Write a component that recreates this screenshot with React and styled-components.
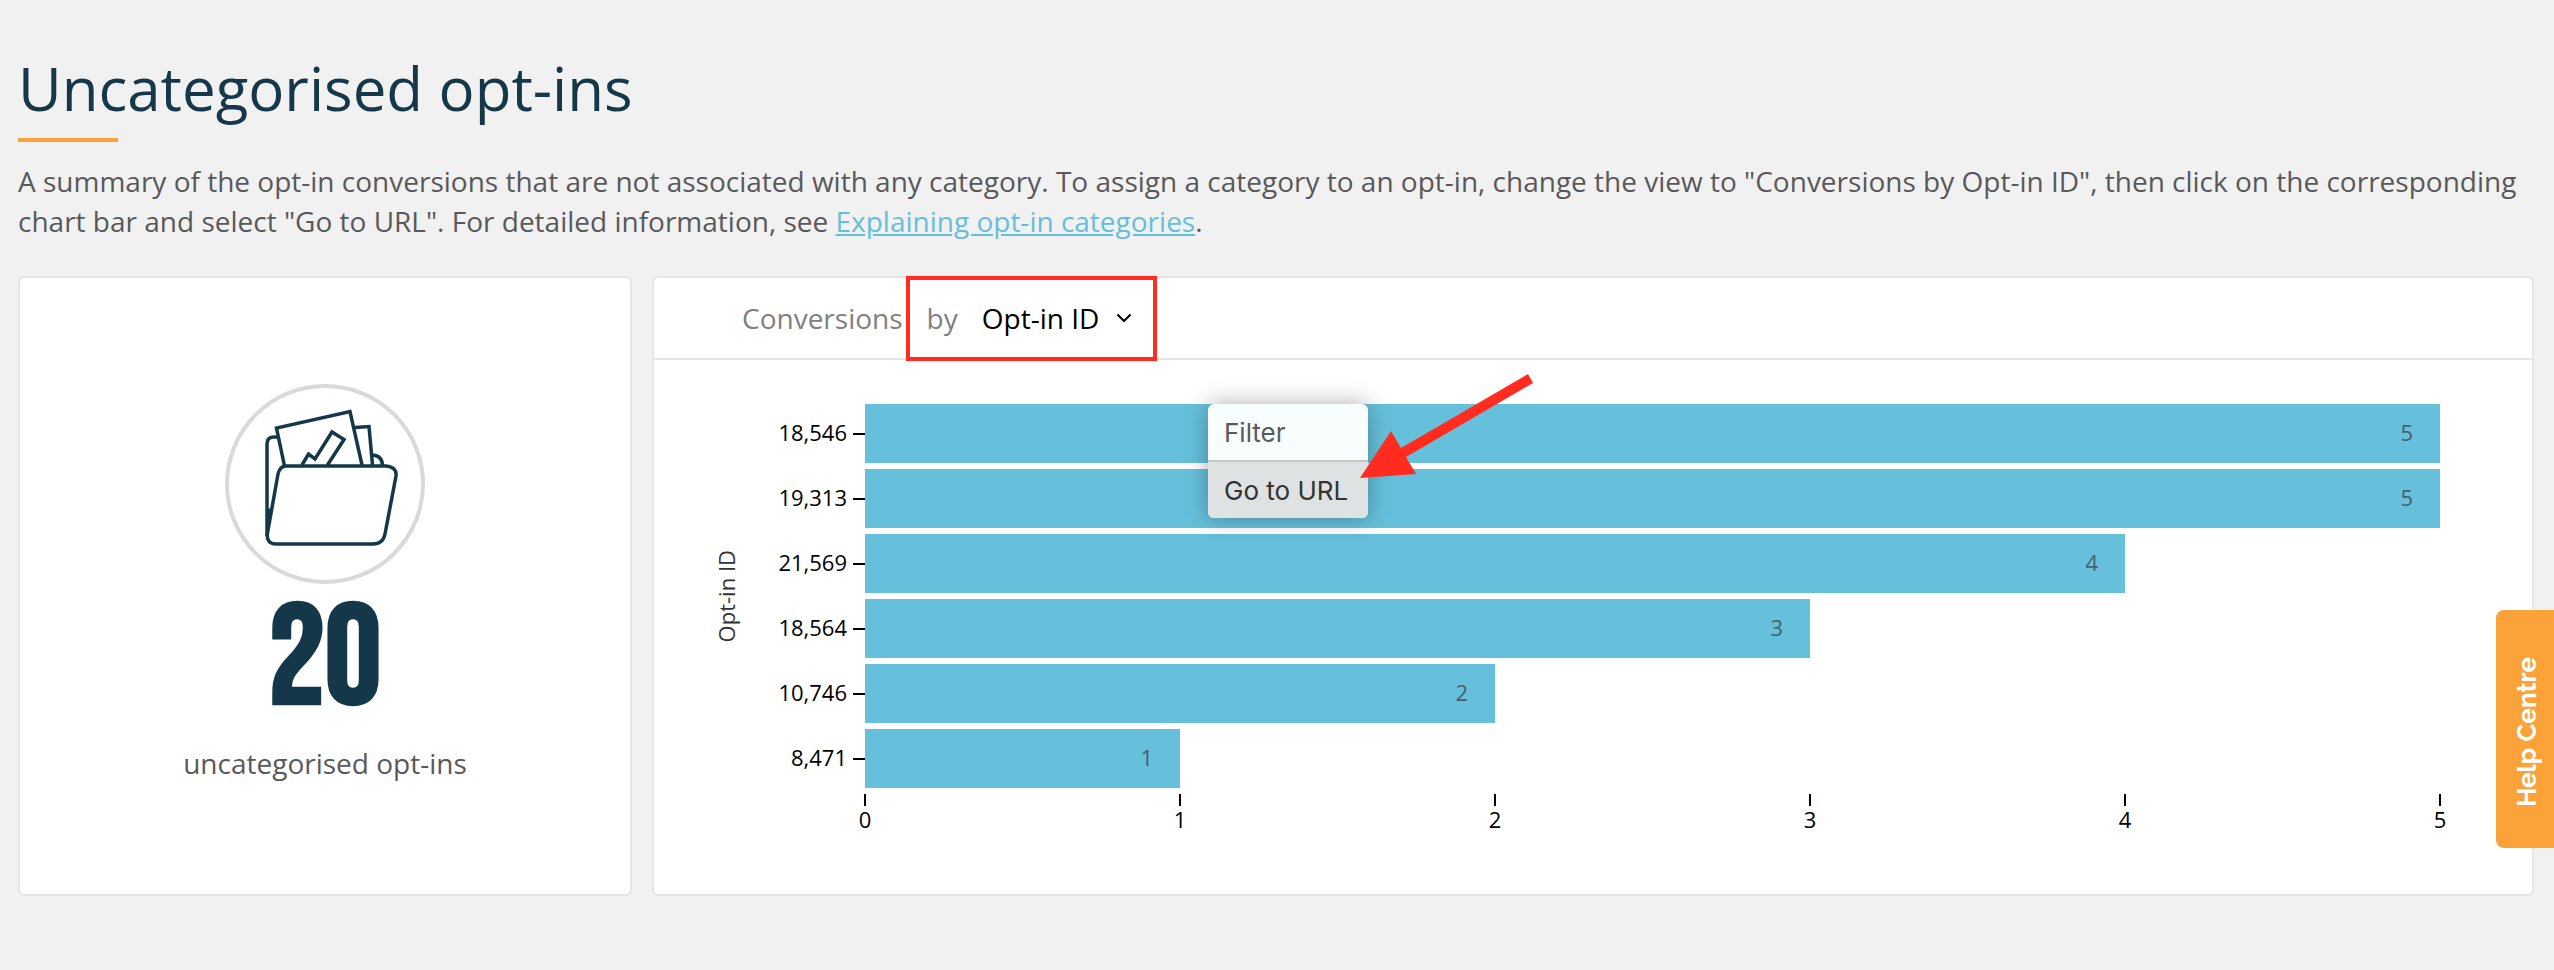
import React from "react";
import styled, { createGlobalStyle } from "styled-components";

const GlobalStyle = createGlobalStyle`
  *, *::before, *::after { box-sizing: border-box; }
  body {
    margin: 0;
    background: #f1f1f1;
    color: #595959;
    font-family: "Open Sans", "Noto Sans", sans-serif;
    font-size: 28px;
    line-height: 40px;
  }
`;

const Page = styled.main`
  min-height: 100vh;
  padding: 48px 20px 72px 18px;
`;

const Title = styled.h1`
  margin: 0;
  color: #15374a;
  font-size: 60px;
  font-weight: 400;
  line-height: 80px;

  &::after {
    content: "";
    display: block;
    width: 100px;
    height: 4px;
    margin-top: 10px;
    background: #fba238;
  }
`;

const Summary = styled.p`
  margin: 19px 0 35px;
`;

const Term = styled.strong`
  font-weight: 500;
`;

const DocLink = styled.a`
  color: #65bfda;
  text-decoration: underline;
`;

const Panels = styled.div`
  display: grid;
  grid-template-columns: minmax(0, 307fr) minmax(0, 941fr);
  gap: 20px;
`;

const Card = styled.section`
  background: #fff;
  border: 2px solid #e5e5e5;
  border-radius: 6px;
`;

const StatCard = styled(Card)`
  display: flex;
  flex-direction: column;
  align-items: center;
  padding: 106px 16px 0;
`;

const StatIcon = styled.svg`
  width: 200px;
  height: 200px;
`;

const StatNumber = styled.div`
  margin-top: 27px;
  color: #15374a;
  font-family: "Bebas Neue", "Anton", "Liberation Sans Narrow", "Liberation Sans", sans-serif;
  font-size: 140px;
  font-weight: 700;
  line-height: 100px;
`;

const StatLabel = styled.div`
  margin-top: 32px;
`;

const ChartHeader = styled.header`
  display: flex;
  height: 80px;
  padding-left: 88px;
  border-bottom: 2px solid #e5e5e5;
  color: #808080;
  box-sizing: content-box;
`;

const HeaderText = styled.span`
  align-self: center;
`;

const GroupBy = styled.label`
  position: relative;
  display: flex;
  align-items: center;
  gap: 24px;
  margin-left: 3px;
  padding: 0 25px 0 21px;

  &::after {
    content: "";
    position: absolute;
    inset: -2px 0 -3px;
    border: 4px solid #ff2c1f;
    pointer-events: none;
  }
`;

const SelectWrap = styled.span`
  display: flex;
  align-items: center;
`;

const GroupSelect = styled.select`
  appearance: none;
  margin: 0 -16px 0 0;
  padding: 0 32px 0 0;
  border: 0;
  background: transparent;
  color: #000;
  font: inherit;
`;

const Chevron = styled.svg`
  width: 16px;
  height: 10px;
  pointer-events: none;
`;

const Chart = styled.div`
  display: grid;
  grid-template-columns: 28px 125px minmax(0, 1fr);
  row-gap: 6px;
  padding: 44px 92px 62px 58px;
  color: #000;
  font-size: 22px;
  line-height: 30px;
`;

const AxisTitle = styled.div`
  justify-self: center;
  align-self: center;
  writing-mode: vertical-rl;
  transform: rotate(180deg);
  color: #333;
`;

const Rows = styled.div`
  display: flex;
  flex-direction: column;
  gap: 6px;
`;

const RowLabel = styled.div`
  display: flex;
  justify-content: flex-end;
  gap: 6px;
  height: 59px;
  line-height: 56px;

  &::after {
    content: "";
    width: 12px;
    height: 2px;
    margin-top: 29px;
    background: #000;
  }
`;

const Plot = styled(Rows)`
  position: relative;
`;

const Bar = styled.div`
  height: 59px;
  padding-right: 27px;
  background: #66c0db;
  color: #44626d;
  line-height: 56px;
  text-align: right;
`;

const ValueAxis = styled.div`
  grid-column: 3;
  display: flex;
  justify-content: space-between;
  line-height: 26px;
`;

const ValueTick = styled.div`
  display: flex;
  flex-direction: column;
  align-items: center;
  width: 0;

  &::before {
    content: "";
    flex: none;
    width: 2px;
    height: 12px;
    background: #000;
  }
`;

const BarMenu = styled.div`
  position: absolute;
  top: 0;
  left: 343px;
  width: 160px;
  border-radius: 6px;
  background: #f8fdfe;
  box-shadow: 0 0 24px rgba(0, 0, 0, 0.32);
  overflow: hidden;
`;

const MenuItem = styled.button`
  display: block;
  width: 100%;
  height: ${(p) => (p.$active ? 58 : 56)}px;
  padding: 2px 16px 0;
  border: 0;
  border-top: ${(p) => (p.$active ? "2px solid #c3c7c8" : "0")};
  background: ${(p) => (p.$active ? "#dfe2e3" : "transparent")};
  color: ${(p) => (p.$active ? "#333" : "#595959")};
  font-family: Inter, "Liberation Sans", sans-serif;
  font-size: 26px;
  line-height: 40px;
  text-align: left;
  white-space: nowrap;
`;

const Arrow = styled.svg`
  position: absolute;
  top: -30px;
  left: 495px;
  width: 174px;
  height: 106px;
  pointer-events: none;
`;

const HelpTab = styled.button`
  position: fixed;
  top: 610px;
  right: 0;
  display: flex;
  align-items: center;
  justify-content: center;
  width: 58px;
  height: 238px;
  padding: 6px 0 0 4px;
  border: 0;
  border-radius: 8px 0 0 8px;
  background: #fba238;
  color: #fff;
  font-family: Raleway, Lato, sans-serif;
  font-size: 26px;
  font-weight: 700;
  line-height: 36px;
`;

const HelpText = styled.span`
  writing-mode: vertical-rl;
  transform: rotate(180deg);
`;

const DATA = [
  { id: "18,546", value: 5 },
  { id: "19,313", value: 5 },
  { id: "21,569", value: 4 },
  { id: "18,564", value: 3 },
  { id: "10,746", value: 2 },
  { id: "8,471", value: 1 },
];
const MAX = 5;

function FolderIcon() {
  return (
    <StatIcon viewBox="0 0 200 200" fill="none" aria-hidden="true">
      <circle cx="100" cy="100" r="98" stroke="#d9d9d9" strokeWidth="4" />
      <g stroke="#15374a" strokeWidth="3.500">
        <path d="M52 53 H49 Q42 53 42 60 V152" />
        <path d="M59.500 82 L51.500 44 L125 27.500 L137 81" />
        <path d="M130 43.500 L144 42.500 L147.500 81" />
        <path d="M148 71 Q157.500 72 157.500 82" />
        <path d="M77 81 L83.500 70 L90 75 L107 48 L119 55.500 L102.500 81" />
        <path d="M61 82 H161 Q172 83 171 92 L160 150 Q158 160 148 160 H51 Q41 160 42.500 149 L53 90 Q55 82 61 82 Z" />
        <path d="M43 125 V146 L46 125 Z" fill="#15374a" strokeWidth="1" />
      </g>
    </StatIcon>
  );
}

export default function App() {
  return (
    <>
      <GlobalStyle />
      <Page>
        <Title>Uncategorised opt-ins</Title>
        <Summary>
          A summary of the opt-in conversions that are not associated with any category. To assign a
          category to an opt-in, change the view to "<Term>Conversions by Opt-in ID</Term>", then click
          on the corresponding chart bar and select "<Term>Go to URL</Term>". For detailed information,
          see <DocLink href="#opt-in-categories">Explaining opt-in categories</DocLink>.
        </Summary>
        <Panels>
          <StatCard>
            <FolderIcon />
            <StatNumber>20</StatNumber>
            <StatLabel>uncategorised opt-ins</StatLabel>
          </StatCard>
          <Card>
            <ChartHeader>
              <HeaderText>Conversions</HeaderText>
              <GroupBy>
                by
                <SelectWrap>
                  <GroupSelect defaultValue="id">
                    <option value="id">Opt-in ID</option>
                  </GroupSelect>
                  <Chevron viewBox="0 0 16 10" fill="none" aria-hidden="true">
                    <path d="M1.500 1.500 L8 8 L14.500 1.500" stroke="#000" strokeWidth="2" />
                  </Chevron>
                </SelectWrap>
              </GroupBy>
            </ChartHeader>
            <Chart>
              <AxisTitle>Opt-in ID</AxisTitle>
              <Rows>
                {DATA.map((d) => (
                  <RowLabel key={d.id}>{d.id}</RowLabel>
                ))}
              </Rows>
              <Plot>
                {DATA.map((d) => (
                  <Bar key={d.id} style={{ width: `${(d.value / MAX) * 100}%` }}>
                    {d.value}
                  </Bar>
                ))}
                <BarMenu>
                  <MenuItem type="button">Filter</MenuItem>
                  <MenuItem type="button" $active>Go to URL</MenuItem>
                </BarMenu>
                <Arrow viewBox="0 0 174 106" aria-hidden="true">
                  <path d="M168 0 L173 9 L46 83 L56 100 L0 104 L31 57 L41 74 Z" fill="#ff2c1f" />
                </Arrow>
              </Plot>
              <ValueAxis>
                {[0, 1, 2, 3, 4, 5].map((n) => (
                  <ValueTick key={n}>{n}</ValueTick>
                ))}
              </ValueAxis>
            </Chart>
          </Card>
        </Panels>
      </Page>
      <HelpTab type="button">
        <HelpText>Help Centre</HelpText>
      </HelpTab>
    </>
  );
}
